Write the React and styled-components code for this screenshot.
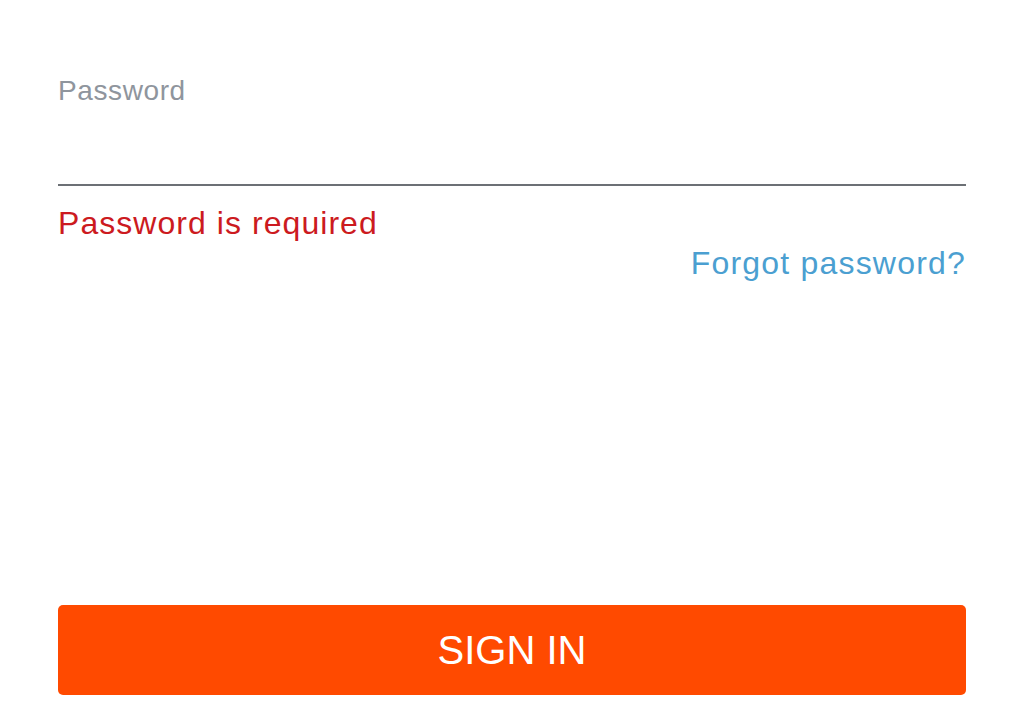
import React from "react";
import styled, { createGlobalStyle } from "styled-components";

const GlobalStyle = createGlobalStyle`
  html, body {
    margin: 0;
    background: #ffffff;
    font-family: "Liberation Sans", Arial, sans-serif;
  }
`;

const App = () => {
  return (
    <>
      <GlobalStyle />
      <Form>
        <Label>Password</Label>
        <Input type="password" />
        <ErrorText>Password is required</ErrorText>
        <ForgotRow>
          <Forgot href="#">Forgot password?</Forgot>
        </ForgotRow>
        <SignIn type="button">SIGN IN</SignIn>
      </Form>
    </>
  );
};

const Form = styled.div`
  width: 908px;
  padding: 75px 58px 0;
  display: flex;
  flex-direction: column;
`;

const Label = styled.label`
  font-size: 28px;
  line-height: 32px;
  color: #8f959d;
  letter-spacing: 0.6px;
`;

const Input = styled.input`
  height: 77px;
  border: none;
  border-bottom: 2px solid #6c7075;
  padding: 0;
  outline: none;
  font-size: 30px;
  background: transparent;
`;

const ErrorText = styled.div`
  margin-top: 22px;
  font-size: 32px;
  line-height: 31px;
  color: #cc1a20;
  letter-spacing: 1.05px;
`;

const ForgotRow = styled.div`
  display: flex;
  justify-content: flex-end;
  margin-top: 9px;
`;

const Forgot = styled.a`
  font-size: 32px;
  line-height: 31px;
  color: #4b9fd1;
  text-decoration: none;
  letter-spacing: 1.2px;
`;

const SignIn = styled.button`
  margin-top: 326px;
  height: 90px;
  border: none;
  border-radius: 5px;
  background: #ff4a00;
  color: #ffffff;
  font-family: "Liberation Sans", Arial, sans-serif;
  font-size: 40px;
  cursor: pointer;
`;

export default App;
